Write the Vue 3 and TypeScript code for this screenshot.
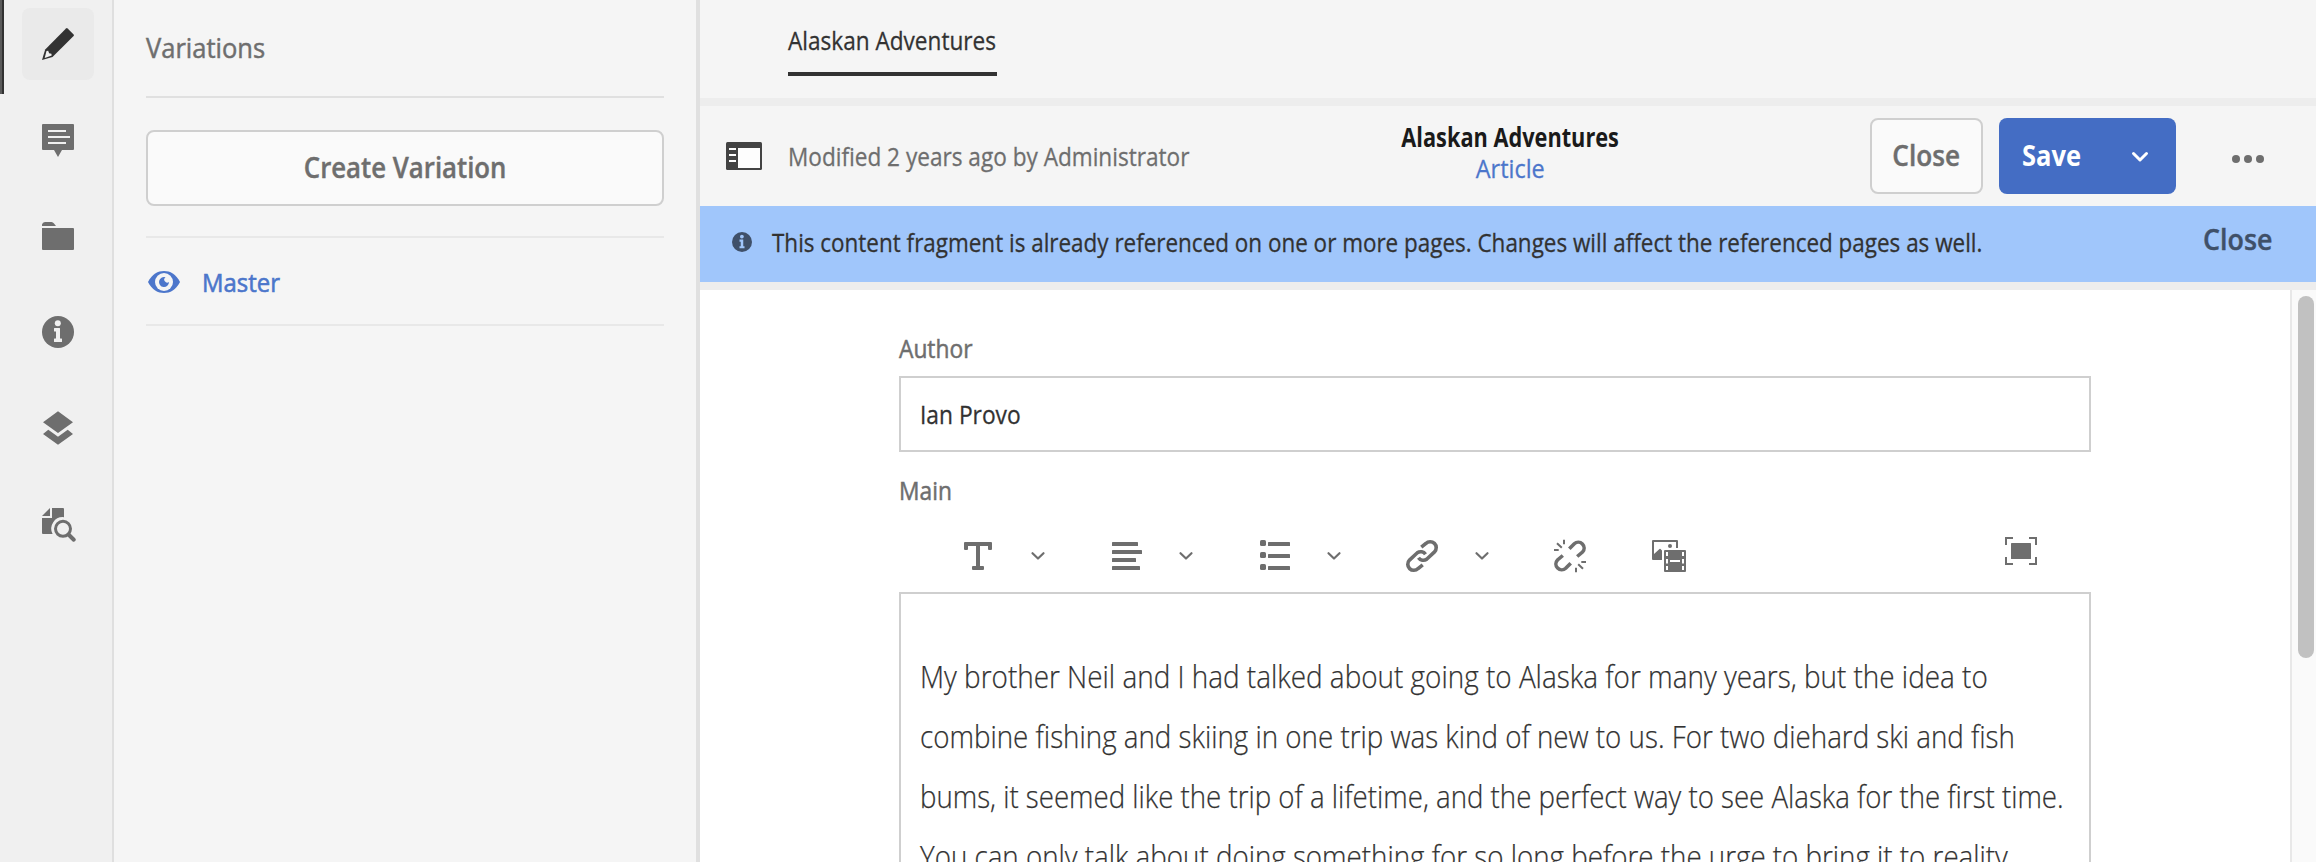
<script setup lang="ts">
const lines: string[] = [
  'My brother Neil and I had talked about going to Alaska for many years, but the idea to',
  'combine fishing and skiing in one trip was kind of new to us. For two diehard ski and fish',
  'bums, it seemed like the trip of a lifetime, and the perfect way to see Alaska for the first time.',
  'You can only talk about doing something for so long before the urge to bring it to reality',
]
</script>

<template>
  <div class="app">
    <nav class="rail">
      <span class="marker"></span>
      <button class="tile active" aria-label="Edit">
        <svg viewBox="0 0 36 36"><path d="M26 2.4q.8-.7 1.6 0l6 6q.8.8 0 1.600L12.500 31 2 34l3.200-10.400z" /><path class="hole" d="M6.500 25l1.700-.2.900 2.400 2.300.6.3 1.600-7 2.600z" /></svg>
      </button>
      <button class="tile" aria-label="Annotations">
        <svg viewBox="0 0 36 36"><path d="M3 2h30a1 1 0 0 1 1 1v24a1 1 0 0 1-1 1H22l-4 7-4-7H3a1 1 0 0 1-1-1V3a1 1 0 0 1 1-1z" /><path class="hole" d="M8 8h18v2H8zM8 14h22v2H8zM8 20h18v2H8z" /></svg>
      </button>
      <button class="tile" aria-label="Assets">
        <svg viewBox="0 0 36 36"><path d="M2 8V6.500Q2.500 4 5 4h6.500q1.500 0 2.500 1.500L16 8zM2 10h31a1 1 0 0 1 1 1v20a1 1 0 0 1-1 1H3a1 1 0 0 1-1-1z" /></svg>
      </button>
      <button class="tile" aria-label="Metadata">
        <svg viewBox="0 0 36 36"><circle cx="18" cy="18" r="16" /><circle class="hole" cx="17.800" cy="9.300" r="3" /><path class="hole" d="M14.500 14h5a.5.5 0 0 1 .5.500V24.600h1.500a.5.5 0 0 1 .5.500v2.400a.5.500 0 0 1-.5.500h-7a.5.500 0 0 1-.5-.5v-2.400a.5.500 0 0 1 .5-.5H16v-7.200h-1.500a.5.500 0 0 1-.5-.5v-2.400a.5.500 0 0 1 .5-.5z" /></svg>
      </button>
      <button class="tile" aria-label="Structure">
        <svg viewBox="0 0 36 36"><path d="M18 1.300l15 11L18 23 3 12.300zM8.300 19.800L18 26.700l9.700-6.900L33 24 18 34.700 3 24z" /></svg>
      </button>
      <button class="tile" aria-label="Preview">
        <svg viewBox="0 0 36 36"><path d="M10 2v8H2zM12 2h11a1 1 0 0 1 1 1v8.200A11.500 11.500 0 0 0 12.600 28H3a1 1 0 0 1-1-1V12h10z" /><circle class="ring" cx="23" cy="22.800" r="7.500" /><path class="handle" d="M28.500 28.500l5.300 5.200" /></svg>
      </button>
    </nav>

    <aside class="panel">
      <h2 class="panel-title"><span class="t w91">Variations</span></h2>
      <button class="btn create"><span class="t w92 center">Create Variation</span></button>
      <div class="variation">
        <svg class="eye" viewBox="0 0 32 22"><path d="M0 11C4 3 10 0 16 0s12 3 16 11c-4 8-10 11-16 11S4 19 0 11z" /><circle class="hole" cx="16" cy="11" r="9" /><path d="M17.500 6.200A5 5 0 1 0 21 11a2.700 2.700 0 0 1-3.500-4.800z" /></svg>
        <span class="t w92">Master</span>
      </div>
    </aside>

    <main class="main">
      <div class="tabs"><div class="tab"><span class="t w87">Alaskan Adventures</span></div></div>

      <header class="bar">
        <svg class="side-toggle" viewBox="0 0 36 28"><rect width="36" height="28" rx="1.500" /><path class="hole" d="M12 6h22v20H12zM3 6h7v2H3zM3 12h7v2H3zM3 18h7v2H3z" /></svg>
        <div class="modified"><span class="t w87">Modified 2 years ago by Administrator</span></div>
        <div class="heading"><strong class="t center">Alaskan Adventures</strong><a class="t w89 center">Article</a></div>
        <div class="actions">
          <button class="btn close"><span class="t w93 center">Close</span></button>
          <button class="save"><span class="t w91">Save</span><svg viewBox="0 0 16 10"><path d="M1.500 1.500L8 8l6.500-6.500" /></svg></button>
          <svg class="more" viewBox="0 0 32 8"><circle cx="4" cy="4" r="4" /><circle cx="16" cy="4" r="4" /><circle cx="28" cy="4" r="4" /></svg>
        </div>
      </header>

      <div class="notice">
        <svg viewBox="2 2 32 32"><circle cx="18" cy="18" r="16" /><circle class="hole" cx="17.800" cy="9.300" r="3" /><path class="hole" d="M14 14h6v10.600h2V28h-8v-3.400h2v-7.200h-2z" /></svg>
        <p><span class="t message">This content fragment is already referenced on one or more pages. Changes will affect the referenced pages as well.</span></p>
        <a><span class="t w95 right">Close</span></a>
      </div>

      <div class="content">
        <form class="form">
          <label class="label"><span class="t w91">Author</span></label>
          <div class="input"><span class="t w91">Ian Provo</span></div>
          <label class="label second"><span class="t w91">Main</span></label>
          <div class="toolbar">
            <div class="tool">
              <svg class="icon" viewBox="0 0 36 36"><path d="M5 4h26a1 1 0 0 1 1 1v6a1 1 0 0 1-1 1h-2a1 1 0 0 1-1-1V8h-8v20h3a1 1 0 0 1 1 1v2a1 1 0 0 1-1 1H13a1 1 0 0 1-1-1v-2a1 1 0 0 1 1-1h3V8H8v3a1 1 0 0 1-1 1H5a1 1 0 0 1-1-1V5a1 1 0 0 1 1-1z" /></svg>
              <svg class="chev" viewBox="0 0 14 8"><path d="M1.500 1.200L7 6.500l5.500-5.300" /></svg>
            </div>
            <div class="tool">
              <svg class="icon" viewBox="0 0 36 36"><rect x="4" y="4" width="26" height="4" rx=".6" /><rect x="4" y="12" width="30" height="4" rx=".6" /><rect x="4" y="20" width="24" height="4" rx=".6" /><rect x="4" y="28" width="28" height="4" rx=".6" /></svg>
              <svg class="chev" viewBox="0 0 14 8"><path d="M1.500 1.200L7 6.500l5.500-5.300" /></svg>
            </div>
            <div class="tool">
              <svg class="icon" viewBox="0 0 36 36"><rect x="4" y="2" width="6" height="6" rx="1.600" /><rect x="4" y="14" width="6" height="6" rx="1.600" /><rect x="4" y="26" width="6" height="6" rx="1.600" /><rect x="12" y="4" width="22" height="4" rx=".6" /><rect x="12" y="16" width="22" height="4" rx=".6" /><rect x="12" y="28" width="22" height="4" rx=".6" /></svg>
              <svg class="chev" viewBox="0 0 14 8"><path d="M1.500 1.200L7 6.500l5.500-5.300" /></svg>
            </div>
            <div class="tool">
              <svg class="icon line" viewBox="0 0 36 36"><path d="M17.300 9.200L21.900 5.500a5.800 5.800 0 0 1 8.600 8.400L22.700 21.200a5.800 5.800 0 0 1-8.200-1.500M18.700 26.800L14.100 30.500a5.800 5.800 0 0 1-8.600-8.400L13.300 14.800a5.800 5.800 0 0 1 8.200 1.500" /></svg>
              <svg class="chev" viewBox="0 0 14 8"><path d="M1.500 1.200L7 6.500l5.500-5.300" /></svg>
            </div>
            <svg class="icon line" viewBox="0 0 36 36"><path d="M17.300 10.800L22.300 5.800a5.800 5.800 0 0 1 8.200 8.200L25.200 18.500M18.700 25.200L13.700 30.200a5.800 5.800 0 0 1-8.200-8.200L10.800 17.500" /><path class="ray" d="M2 12h4.700M5 5.200l4.800 4.600M12 1.700v4.600M34 24h-4.700M31 30.800l-4.800-4.600M24 34.300v-4.600" /></svg>
            <svg class="icon media" viewBox="0 0 36 36"><path d="M3 2h24a1 1 0 0 1 1 1v7h-2V4H4v12l5.500-5q.5-.4 1 0L12 12.500V22H3a1 1 0 0 1-1-1V3a1 1 0 0 1 1-1z" /><circle cx="20" cy="8" r="2" /><rect x="14" y="12" width="22" height="22" rx="1" /><path class="hole" d="M16 14h2v4h-2zM16 21h2v4.500h-2zM16 28h2v4h-2zM32 14h2v4h-2zM32 21h2v4.500h-2zM32 28h2v4h-2zM20 22h10v2H20z" /></svg>
            <svg class="full" viewBox="0 0 32 28"><rect x="6" y="6" width="20" height="16" rx=".6" /><path d="M1 8V1h7M24 1h7v7M31 20v7h-7M8 27H1v-7" /></svg>
          </div>
          <div class="editor"><p v-for="(line, i) in lines" :key="i"><span class="t" :class="'line' + (i + 1)">{{ line }}</span></p></div>
        </form>
        <div class="scroll"><span class="thumb"></span></div>
      </div>
    </main>
  </div>
</template>

<style>
body { margin: 0; overflow: hidden; }
</style>
<style scoped>
* { box-sizing: border-box; }
.app { display: flex; width: 2316px; height: 862px; overflow: hidden; background: #f5f5f5; color: #323232; font-family: "Open Sans", "Noto Sans", sans-serif; font-size: 26px; }
.app svg { display: block; flex: none; fill: currentColor; }
button { font: inherit; color: inherit; border: 0; padding: 0; margin: 0; background: none; }
p, h2 { margin: 0; font-weight: inherit; font-size: inherit; }

/* Slightly narrowed text, one width class per text role */
.t { display: inline-block; white-space: nowrap; transform-origin: left center; }
.center { transform-origin: center; }
.right { transform-origin: right center; }
.w87 { transform: scaleX(.869); }
.w89 { transform: scaleX(.9); }
.w91 { transform: scaleX(.911); }
.w92 { transform: scaleX(.92); }
.w93 { transform: scaleX(.935); }
.w95 { transform: scaleX(.957); }
.message { transform: scaleX(.8635); }
.line1 { transform: scaleX(.8995); }
.line2 { transform: scaleX(.895); }
.line3 { transform: scaleX(.8915); }
.line4 { transform: scaleX(.8945); }

.rail { position: relative; width: 114px; flex: none; display: flex; flex-direction: column; gap: 24px; align-items: flex-start; padding: 8px 0 0 22px; background: #f0f0f0; border-right: 2px solid #dfdfdf; color: #6e6e6e; }
.marker { position: absolute; left: 0; top: 0; width: 4px; height: 94px; background: #323232; border-left: 2px solid #5a5a5a; }
.tile { width: 72px; height: 72px; flex: none; display: flex; align-items: center; justify-content: center; border-radius: 8px; }
.tile svg { width: 36px; height: 36px; overflow: visible; }
.active { background: #eaeaea; color: #323232; }
.rail .hole { fill: #f0f0f0; }
.ring { fill: none; stroke: currentColor; stroke-width: 3; }
.handle { fill: none; stroke: currentColor; stroke-width: 4; stroke-linecap: round; }

.panel { width: 586px; flex: none; padding: 0 32px; border-right: 4px solid #e0e0e0; color: #6e6e6e; }
.panel-title { height: 98px; border-bottom: 2px solid #e0e0e0; padding-bottom: 2px; display: flex; align-items: center; font-size: 28px; -webkit-text-stroke: .5px; }
.btn { display: flex; align-items: center; justify-content: center; height: 76px; padding-bottom: 2px; border: 2px solid #cfcfcf; border-radius: 8px; background: #fafafa; color: #6e6e6e; font-size: 28px; font-weight: 600; -webkit-text-stroke: .4px; }
.create { width: 518px; margin: 32px 0 30px; }
.variation { display: flex; align-items: center; gap: 22px; height: 90px; padding: 2px 0 0 2px; border: solid #e8e8e8; border-width: 2px 0; color: #4c76cb; -webkit-text-stroke: .6px; }
.eye { width: 32px; height: 22px; }
.variation .hole { fill: #f5f5f5; }

.main { flex: 1; min-width: 0; display: flex; flex-direction: column; }
.tabs { height: 106px; flex: none; padding-left: 88px; border-bottom: 8px solid #ededed; display: flex; align-items: flex-start; }
.tab { width: 209px; height: 76px; padding-top: 8px; border-bottom: 4px solid #323232; display: flex; align-items: center; -webkit-text-stroke: .3px; }
.bar { position: relative; height: 100px; flex: none; display: flex; align-items: center; padding: 0 52px 0 26px; }
.side-toggle { width: 36px; height: 28px; color: #434343; }
.side-toggle .hole { fill: #fdfdfd; }
.modified { margin-left: 26px; color: #6e6e6e; flex: 1; -webkit-text-stroke: .3px; }
.heading { position: absolute; left: 0; right: 0; top: 15px; margin: auto; width: 280px; display: flex; flex-direction: column; align-items: center; line-height: 32px; padding-left: 4px; }
.heading strong { color: #1a1a1a; font-weight: 700; transform: scaleX(.836); }
.heading a { margin-top: -1px; color: #4c76cb; -webkit-text-stroke: .3px; }
.actions { display: flex; align-items: center; }
.close { width: 113px; }
.save { width: 177px; height: 76px; margin-left: 16px; padding: 0 28px 2px 23px; border-radius: 8px; background: #446dc4; color: #fff; display: flex; align-items: center; justify-content: space-between; font-size: 28px; font-weight: 700; }
.save svg { width: 16px; height: 10px; margin-top: 3px; overflow: visible; }
.save path { fill: none; stroke: #fff; stroke-width: 3; stroke-linecap: round; stroke-linejoin: round; }
.more { width: 32px; height: 8px; margin: 6px 0 0 56px; color: #6e6e6e; }

.notice { height: 84px; flex: none; background: #a0c6fb; border-bottom: 8px solid #ededed; display: flex; align-items: center; padding: 0 44px 4px 32px; }
.notice svg { width: 20px; height: 20px; color: #3f5069; }
.notice .hole { fill: #a0c6fb; }
.notice p { flex: 1; margin-left: 20px; -webkit-text-stroke: .3px; }
.notice a { color: #3f5069; font-size: 28px; font-weight: 600; padding-bottom: 6px; -webkit-text-stroke: .4px; }

.content { flex: 1; min-height: 0; display: flex; justify-content: space-between; background: #fff; }
.form { width: 1192px; margin-left: 199px; padding-top: 42px; }
.label { display: block; height: 32px; line-height: 32px; font-size: 25px; color: #6e6e6e; -webkit-text-stroke: .5px; }
.input { height: 76px; margin-top: 12px; padding: 0 19px 1px; border: 2px solid #cfcfcf; display: flex; align-items: center; font-size: 25px; -webkit-text-stroke: .3px; }
.second { margin-top: 22px; }
.toolbar { height: 86px; display: flex; align-items: center; padding: 14px 54px 0 61px; color: #6e6e6e; }
.tool { width: 148px; display: flex; align-items: center; gap: 34.5px; }
.icon { width: 36px; height: 36px; overflow: visible; }
.chev { width: 14px; height: 8px; margin-top: -1px; overflow: visible; }
.chev path { fill: none; stroke: currentColor; stroke-width: 2.200; stroke-linecap: round; stroke-linejoin: round; }
.line path { fill: none; stroke: currentColor; stroke-width: 3.600; }
.line .ray { stroke-width: 2; }
.media { margin-left: 62px; }
.media .hole { fill: #fff; }
.full { width: 32px; height: 28px; margin: 0 0 10px auto; }
.full path { fill: none; stroke: currentColor; stroke-width: 2; }
.editor { height: 400px; padding: 52px 19px 0; border: 2px solid #cfcfcf; font-size: 31px; line-height: 60px; font-weight: 300; color: #323232; -webkit-text-stroke: .25px; }
.editor p { height: 60px; }
.scroll { width: 26px; border-left: 2px solid #e8e8e8; background: #fafafa; padding: 6px 0 0 6px; }
.thumb { display: block; width: 16px; height: 362px; border-radius: 8px; background: #c1c1c1; }
</style>
